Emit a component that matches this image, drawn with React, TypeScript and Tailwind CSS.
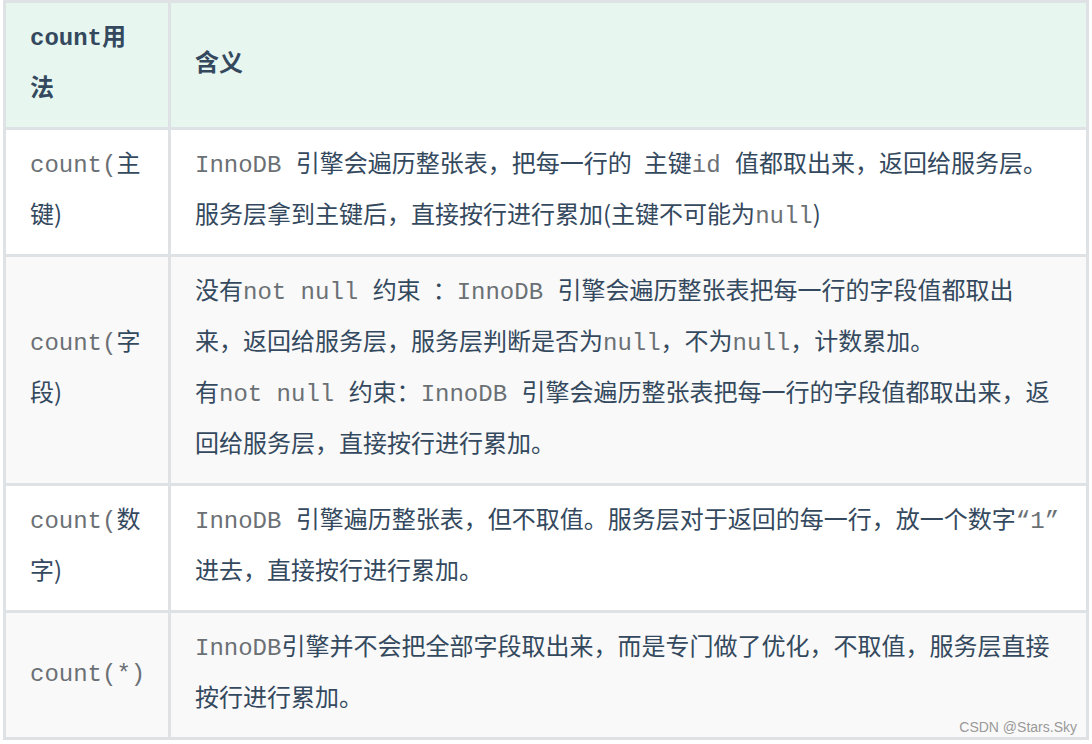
import React from 'react';

const Code: React.FC<{ children: React.ReactNode }> = ({ children }) => (
  <code className="font-['Liberation_Mono','Courier_New',monospace] leading-none text-[#6b7075]">{children}</code>
);

const cellCls = 'border-[3px] border-[#dfe2e5] px-6 pt-[6px] pb-[16px] align-middle';

const rows: { usage: React.ReactNode; meaning: React.ReactNode; striped: boolean }[] = [
  {
    usage: (
      <>
        <Code>count(</Code>主键)
      </>
    ),
    meaning: (
      <>
        <Code>InnoDB </Code>引擎会遍历整张表，把每一行的{'\u2002'}主键<Code>id </Code>值都取出来，返回给服务层。
        <br />
        服务层拿到主键后，直接按行进行累加(主键不可能为<Code>null</Code>)
      </>
    ),
    striped: false,
  },
  {
    usage: (
      <>
        <Code>count(</Code>字段)
      </>
    ),
    meaning: (
      <>
        没有<Code>not null </Code>约束{'\u2002'}：<Code>InnoDB </Code>引擎会遍历整张表把每一行的字段值都取出
        <br />
        来，返回给服务层，服务层判断是否为<Code>null</Code>，不为<Code>null</Code>，计数累加。
        <br />
        有<Code>not null </Code>约束：<Code>InnoDB </Code>引擎会遍历整张表把每一行的字段值都取出来，返
        <br />
        回给服务层，直接按行进行累加。
      </>
    ),
    striped: true,
  },
  {
    usage: (
      <>
        <Code>count(</Code>数字)
      </>
    ),
    meaning: (
      <>
        <Code>InnoDB </Code>引擎遍历整张表，但不取值。服务层对于返回的每一行，放一个数字<Code>“1”</Code>
        <br />
        进去，直接按行进行累加。
      </>
    ),
    striped: false,
  },
  {
    usage: <Code>count(*)</Code>,
    meaning: (
      <>
        <Code>InnoDB</Code>引擎并不会把全部字段取出来，而是专门做了优化，不取值，服务层直接
        <br />
        按行进行累加。
      </>
    ),
    striped: true,
  },
];

export default function App() {
  return (
    <div className="w-[1092px] h-[744px] bg-white overflow-hidden font-['Noto_Sans_CJK_SC',sans-serif] text-[#34495e]">
      <div className="relative ml-[3px] w-[1086px]">
        <table className="w-[1086px] table-fixed border-collapse text-[24px] leading-[51px]">
          <colgroup>
            <col className="w-[165px]" />
            <col />
          </colgroup>
          <thead>
            <tr className="bg-[#e7f6ef]">
              <th className={`${cellCls} text-left font-bold`}>
                <code className="font-['Liberation_Mono','Courier_New',monospace] leading-none">count</code>用法
              </th>
              <th className={`${cellCls} text-left font-bold`}>含义</th>
            </tr>
          </thead>
          <tbody>
            {rows.map((r, i) => (
              <tr key={i} className={r.striped ? 'bg-[#f9f9f9]' : 'bg-white'}>
                <td className={cellCls}>{r.usage}</td>
                <td className={cellCls}>{r.meaning}</td>
              </tr>
            ))}
          </tbody>
        </table>
        <span className="absolute right-[12px] bottom-[6px] text-[14px] leading-none text-[#9a9a9a] font-['Liberation_Sans',Arial,sans-serif]">
          CSDN @Stars.Sky
        </span>
      </div>
    </div>
  );
}
